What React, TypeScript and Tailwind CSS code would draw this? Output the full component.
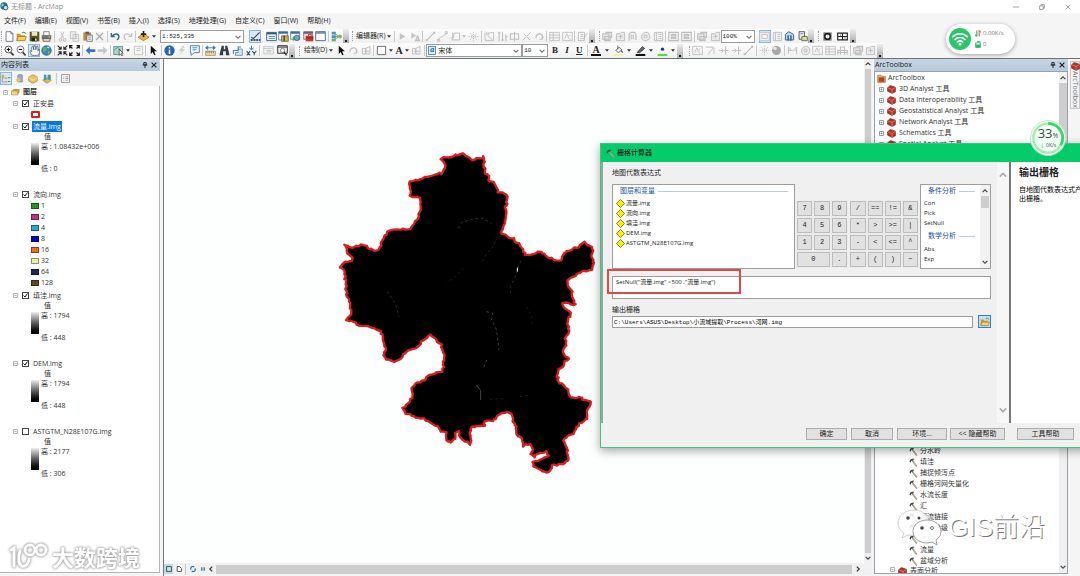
import React, { ReactNode } from "react";

const UI = "font-['Open_Sans','Noto_Sans_CJK_SC',sans-serif]";
const SONG = "font-['Liberation_Mono','Noto_Sans_CJK_SC',monospace]";

/* ---------- icons (16 x 16 grid) ---------- */

const G = "#bebebe";
const K = "#222222";

const icons: Record<string, ReactNode> = {
  new: <path d="M3 1h7l3 3v11H3zM10 1v3h3" fill="#fff" stroke="#667" strokeWidth="1.2" />,
  open: <><path d="M1 4h5l1 2h6v8H1z" fill="#c99a2e" /><path d="M3 8h12l-2 6H1z" fill="#f3cf60" stroke="#9a7420" /><path d="M9 3c2-2 4-1 5 1" stroke="#3a8a4a" fill="none" strokeWidth="1.5" /></>,
  save: <><path d="M1 1h14v14H1z" fill="#5d5420" /><path d="M4 1h8v6H4z" fill="#e8e6d0" /><path d="M4 10h8v5H4z" fill="#222" /><path d="M9 11h2v3H9z" fill="#fff" /></>,
  print: <><path d="M4 1h8v6H4z" fill="#fff" stroke="#555" /><path d="M1 6h14v6H1z" fill="#77776a" /><path d="M3 11h10v4H3z" fill="#ddd" stroke="#444" /><path d="M11 8h2v1h-2z" fill="#e8e040" /></>,
  cut: <path d="M5 1l5 10M10 1L6 11M5 11a2 2 0 100 4 2 2 0 000-4M11 11a2 2 0 100 4 2 2 0 000-4" stroke={G} strokeWidth="1.4" fill="none" />,
  copy: <path d="M2 1h8v10H2zM6 5h8v10H6zM8 8h4M8 11h4" stroke={G} strokeWidth="1.2" fill="#eee" />,
  paste: <><path d="M2 2h11v12H2z" fill="#b98a45" /><path d="M5 1h5v3H5z" fill="#555" /><path d="M7 6h8v9H7z" fill="#f4f4fa" stroke="#555" /><path d="M9 9h4M9 12h4" stroke="#668" /></>,
  del: <path d="M3 3l10 10M13 3L3 13" stroke="#aaa" strokeWidth="1.8" />,
  undo: <path d="M2 3v5h5M3 8c3-5 9-5 10 0 0 3-1 4-3 5" stroke="#31679f" strokeWidth="2.1" fill="none" />,
  redo: <path d="M14 3v5H9M13 8C10 3 4 3 3 8c0 3 1 4 3 5" stroke="#c4c4c4" strokeWidth="1.8" fill="none" />,
  add: <><path d="M8 4l8 5-8 5-8-5z" fill="#e9bd3a" stroke="#8a6d1d" /><path d="M8 0v9M4 4.500h8" stroke="#222" strokeWidth="2.400" /></>,
  editor: <><path d="M1 13h14" stroke="#222" strokeWidth="2" strokeDasharray="3 1" /><path d="M2 9l3 2 9-9" stroke="#444" strokeWidth="1.6" fill="none" /></>,
  toc: <><path d="M1 2h14v12H1z" fill="#fff" stroke="#2f6294" strokeWidth="1.4" /><path d="M1 2h14v3H1z" fill="#2f6294" /><path d="M4 8h9M4 11h9" stroke="#4a83c0" strokeWidth="1.4" /></>,
  catalog: <><path d="M1 1h13v12H1z" fill="#fff" stroke="#2f6294" /><path d="M1 1h13v3H1z" fill="#3a6da0" /><path d="M5 7h10v8H5z" fill="#d2b332" stroke="#555" /><path d="M9 7v8" stroke="#444" strokeWidth="2" /></>,
  search: <><path d="M1 1h13v11H1z" fill="#fff" stroke="#2f6294" /><path d="M1 1h13v3H1z" fill="#3a6da0" /><circle cx="10" cy="10" r="4" fill="#6ba6c5" stroke="#275070" /><path d="M5 8v6" stroke="#49a066" strokeWidth="2" /></>,
  toolbox: <><path d="M1 1h13v11H1z" fill="#f7dada" stroke="#7c4850" /><path d="M1 1h13v3H1z" fill="#675c80" /><path d="M4 7h11v8H4z" fill="#c03830" /><path d="M8 7V5h4v2M4 10h11" stroke="#6c1712" fill="none" /></>,
  python: <><path d="M1 1h14v13H1z" fill="#fff" stroke="#4a6f9a" strokeWidth="1.4" /><path d="M1 1h14v3H1z" fill="#6f8fb9" /></>,
  model: <><path d="M4 3l8 5-8 5M4 8h8" stroke="#666" fill="none" /><path d="M1 1h6v4H1zM1 6h6v4H1z" fill="#4593c4" /><path d="M1 11h6v4H1z" fill="#57b273" /><circle cx="13" cy="8" r="3" fill="#80bd58" /></>,
  zin: <><path d="M9 10l5 5" stroke="#444" strokeWidth="2.600" /><circle cx="6.500" cy="6.500" r="5" fill="#f7fafc" stroke="#555" strokeWidth="1.400" /><path d="M4 6.500h5M6.500 4v5" stroke="#111" strokeWidth="1.600" /></>,
  zout: <><path d="M9 10l5 5" stroke="#444" strokeWidth="2.600" /><circle cx="6.500" cy="6.500" r="5" fill="#f7fafc" stroke="#777" strokeWidth="1.400" /><path d="M4 6.500h5" stroke="#111" strokeWidth="1.600" /></>,
  hand: <path d="M4 15L1 9l1-1 2 2V3l2-1 1 5V1h2l1 6 1-5h2v7l1-3 2 1-2 8z" fill="#fff" stroke="#4d5a66" strokeWidth="1.1" />,
  globe: <><circle cx="8" cy="8" r="7" fill="#3d82bd" stroke="#2a5680" /><path d="M4 3c4 0 5 2 4 4s-2 4-4 3-1-5 0-7M10 9c3-1 4 0 3 3l-3 2z" fill="#69b45a" /><path d="M9 3l3 1" stroke="#cfe6fa" strokeWidth="2" /></>,
  shrink: <path d="M1 1l5 5M15 1l-5 5M1 15l5-5M15 15l-5-5M6 2v4H2M10 2v4h4M6 14v-4H2M10 14v-4h4" stroke={K} strokeWidth="1.600" fill="none" />,
  grow: <path d="M1 1l4 4M15 1l-4 4M1 15l4-4M15 15l-4-4M1 5V1h4M11 1h4v4M1 11v4h4M11 15h4v-4" stroke={K} strokeWidth="1.800" fill="none" />,
  back: <path d="M1 8l6-6v4h8v4H7v4z" fill="#3875c8" />,
  fwd: <path d="M15 8L9 2v4H1v4h8v4z" fill="#c6c6c6" />,
  selfeat: <><path d="M1 2h13v8l-5 4H1z" fill="#a6d5cf" stroke="#4b777c" /><path d="M2 7l5-4 4 6" stroke="#486" fill="none" /><path d="M9 6v9l2-2 2 3 1-1-2-3h3z" fill="#fff" stroke="#333" /></>,
  clear: <path d="M2 2h12v12H2zM5 5h6M5 8h6" stroke="#c5c5c5" fill="#f4f4f4" strokeWidth="1.300" />,
  arrow: <path d="M4 1v12l3-3 2 5 2-1-2-5h4z" fill="#111" />,
  arrowG: <path d="M4 3v10l8-5z" fill="#c4c4c4" />,
  arrowA: <><path d="M2 2v9l7-4z" fill="#c4c4c4" /><path d="M8 14l3-7 3 7zM9 12h4" stroke={G} fill="none" strokeWidth="1.500" /></>,
  info: <><circle cx="8" cy="8" r="7.500" fill="#2e63a9" /><path d="M8 7v6M8 3v2" stroke="#fff" strokeWidth="2.200" /></>,
  bolt: <path d="M10 1L4 9h4l-3 6 8-9H9l4-5z" fill="#cdcdcd" />,
  popup: <><path d="M2 1h13v10H8l-5 4v-4H2z" fill="#f0f8fd" stroke="#38729c" strokeWidth="1.200" /><path d="M5 4h7M5 7h6" stroke="#3ba1c8" strokeWidth="1.500" /></>,
  measure: <><path d="M1 9h14v6H1z" fill="#eee2a1" stroke="#8c7850" /><path d="M3 9v3M6 9v3M9 9v3M12 9v3" stroke="#555" /><path d="M1 4h14M1 4l3-2.500v5zM15 4l-3-2.500v5z" stroke="#367ca6" fill="#367ca6" strokeWidth="1.200" /></>,
  find: <path d="M4 1h3v5h2V1h3l3 12v2h-5V9H6v6H1v-2z" fill="#333a45" />,
  route: <><path d="M2 13V8h7V3h4" stroke="#4a84ba" strokeWidth="1.500" fill="none" /><path d="M9 6h6v9H5v-4h4z" fill="#d7e8f5" stroke="#38729c" /></>,
  xy: <><path d="M8 1v6M5 4l3 3 3-3" stroke="#4a84ba" strokeWidth="1.500" fill="none" /><path d="M1 9l5 6M6 9l-5 6M9 9l3 3 3-3M12 12v3" stroke="#357" strokeWidth="1.600" fill="none" /></>,
  winG: <path d="M1 2h14v11H1zM1 5h14M5 8h7M5 10h7" stroke="#c1c1c1" fill="#f1f1f1" strokeWidth="1.200" />,
  viewer: <><path d="M1 1h14v11H1z" fill="#eee" stroke="#333" strokeWidth="1.400" /><path d="M1 3h14" stroke="#333" strokeWidth="1.500" /><circle cx="8" cy="8" r="3" fill="#fff" stroke="#555" /><path d="M10 10l4 5" stroke="#333" strokeWidth="2" /></>,
  line: <><path d="M2 14L14 2" stroke={G} strokeWidth="1.500" /><path d="M1 12h3v3H1zM12 1h3v3h-3z" fill={G} /></>,
  curve: <path d="M2 14C4 6 8 11 14 3M1 12h3v3H1zM12 1h3v3h-3z" stroke={G} strokeWidth="1.300" fill="none" />,
  poly: <path d="M2 13h12V3H6L5 10H1M4 2v11" stroke={G} strokeWidth="1.400" fill="none" />,
  burst: <path d="M8 1v14M1 8h14M3 3l10 10M13 3L3 13M5 8a3 3 0 106 0 3 3 0 10-6 0" stroke={G} fill="none" strokeDasharray="2 1" />,
  cutpoly: <path d="M1 3h6l7-1v12H2zM3 4l9 9M7 3v3" stroke={G} strokeWidth="1.300" fill="none" />,
  cols: <path d="M3 1v14M8 1v14M13 5v10M1 3h4M6 13h4M12 8h3" stroke={G} strokeWidth="1.600" />,
  split: <path d="M2 4h12v8H2zM8 1v14" stroke={G} strokeWidth="1.500" fill="none" />,
  cross: <path d="M2 14L14 2M4 4l9 9" stroke={G} strokeWidth="1.400" />,
  rotG: <path d="M3 10a5 5 0 119 2M12 12V7M12 12H8" stroke={G} strokeWidth="1.700" fill="none" />,
  tableG: <path d="M1 2h14v12H1zM1 6h14M1 10h14M6 2v12" stroke={G} strokeWidth="1.200" fill="#f4f4f4" />,
  sketchG: <path d="M1 2h14v12H1zM4 11l3-7 2 4 3-2M8 8l4 5" stroke={G} strokeWidth="1.200" fill="none" />,
  formG: <path d="M2 2h9v12H2zM5 5h4M5 8h4M5 11h3M9 12l6-9" stroke={G} strokeWidth="1.400" fill="none" />,
  stackG: <path d="M1 4h9v8H1zM5 2h9v8M4 8h8v6H4z" stroke={G} strokeWidth="1.500" fill="#e4e4e4" />,
  handG: <path d="M3 14V5l3-3h5l2 3v8M6 5v7M9 5v7" stroke={G} strokeWidth="1.700" fill="none" />,
  cycleG: <path d="M3 5l4-3h4l3 4v5l-4 3H5l-3-4zM6 6h4v4H6z" stroke={G} strokeWidth="1.400" fill="#eee" />,
  pageG: <path d="M2 2h12v12H2zM5 2v12M8 5h4M8 8h4M8 11h4" stroke={G} strokeWidth="1.300" fill="#f1f1f1" />,
  gridG: <path d="M1 2h14v12H1zM5 5h2v2H5zM9 5h2v2H9zM5 9h2v2H5zM9 9h2v2H9z" stroke={G} strokeWidth="1.500" fill="#eee" />,
  foldG: <path d="M2 4h5l2-2h5v12H2zM5 8h6M8 5v6" stroke={G} strokeWidth="1.400" fill="#eaeaea" />,
  frameG: <path d="M1 2h14v12H1zM4 5h8v6H4z" stroke={G} strokeWidth="1.200" fill="#f3f3f3" />,
  pages: <><path d="M2 5l5-4 7 4v8H2z" fill="#bcd8ea" stroke="#345b80" strokeWidth="1.300" /><path d="M6 6v8M10 6v8" stroke="#345b80" strokeWidth="2" /></>,
  driven: <><path d="M3 1h8v11H3z" fill="#e9eef3" stroke="#444" strokeWidth="1.200" /><path d="M7 8h8v6H7z" fill="#d7dd95" stroke="#444" /><path d="M5 4h4" stroke="#567" /></>,
  geo: <><path d="M2 2h12v12H2z" fill="#777" /><circle cx="8" cy="8" r="4" fill="#eee" stroke="#111" strokeWidth="2" /></>,
  extent: <path d="M1 3h14v10H1zM1 8h14M8 3v10M5 6h1M11 10h1" stroke={K} strokeWidth="1.700" fill="#fff" />,
  rect: <path d="M2 2h12v12H2z" stroke="#555" strokeWidth="1.200" fill="#fff" />,
  nodes: <path d="M2 5h5v8H2zM7 5l6-3v11H7zM4 9h8" stroke="#bbb" strokeWidth="1.300" fill="none" />,
  bucket: <><path d="M4 8l5-5 4 4-5 4z" fill="#eee" stroke="#444" /><path d="M12 8l2 3" stroke="#333" strokeWidth="1.500" /><path d="M7 1v5" stroke="#333" /><path d="M1 13h14v3H1z" fill="#f5efa0" /></>,
  pen: <><path d="M3 11l8-9 3 3-7 6z" fill="#667" stroke="#222" /><path d="M1 13h14v3H1z" fill="#111" /></>,
  dot: <><circle cx="8" cy="6" r="2.400" fill="#1c2fb8" /><path d="M1 13h14v3H1z" fill="#4be33c" /></>,
  edgeG: <path d="M1 8h6M5 5l3 3-3 3M11 2v12M9 8h6" stroke={G} strokeWidth="1.400" fill="none" />,
  traceG: <path d="M1 3h11l2 2M12 4L4 14M13 5v8" stroke={G} strokeWidth="1.400" fill="none" />,
  ballG: <><circle cx="8" cy="8" r="6.500" fill="#a8a8a8" /><circle cx="6" cy="5" r="2.500" fill="#e6e6e6" /></>,
  meshG: <path d="M2 13V3l6 6 6-6v10M2 8h4M11 8h3" stroke={G} strokeWidth="1.400" fill="none" />,
  treeG: <path d="M1 14V8h14v6M5 14V3h6v11M1 11h14" stroke={G} strokeWidth="1.500" fill="none" />,
};

function Ico({ n, className = "size-[11px]" }: { n: string; className?: string }) {
  return (
    <svg viewBox="0 0 16 16" className={`shrink-0 ${className}`} aria-hidden="true">
      {icons[n]}
    </svg>
  );
}

function Tool({ n, on = false }: { n: string; on?: boolean }) {
  return (
    <button
      type="button"
      aria-label={n}
      className={`flex h-[13px] w-3 items-center justify-center ${on ? "border border-[#8ab8dc] bg-[#d3e8f8]" : ""}`}
    >
      <Ico n={n} />
    </button>
  );
}

/* A run of equally spaced tool buttons */
function Run({ names, w, on }: { names: string; w: string; on?: string }) {
  return (
    <div className={`flex shrink-0 items-center justify-around ${w}`}>
      {names.split(" ").map((n, i) => (
        <Tool key={i} n={n} on={n === on} />
      ))}
    </div>
  );
}

const Sep = () => <span className="mx-px h-[11px] w-px shrink-0 bg-[#c9c9c9]" />;
const Grip = () => <span className="mx-px h-[10px] w-0 shrink-0 border-l border-dotted border-[#a0a0a0]" />;
const More = () => (
  <span className="flex h-[14px] w-[6px] shrink-0 items-end justify-center bg-gradient-to-b from-[#eeeeee] to-[#a9a9a9]">
    <span className="mb-px size-[2px] bg-[#222]" />
  </span>
);
const Caret = ({ faint = false, wide = false }: { faint?: boolean; wide?: boolean }) => (
  <svg viewBox="0 0 6 4" className={`h-[3px] w-1 shrink-0 ${wide ? "mx-[2px]" : "mx-px"}`} aria-hidden="true">
    <path d="M0 0h6L3 4z" fill={faint ? "#bbb" : "#333"} />
  </svg>
);
const Chevron = ({ dir, className = "" }: { dir: "up" | "down" | "left" | "right"; className?: string }) => {
  const d = { up: "M1 7l4-4 4 4", down: "M1 3l4 4 4-4", left: "M7 1L3 5l4 4", right: "M3 1l4 4-4 4" }[dir];
  return (
    <svg viewBox="0 0 10 10" className={`size-[6px] shrink-0 ${className}`} aria-hidden="true">
      <path d={d} fill="none" stroke="currentColor" strokeWidth="2" />
    </svg>
  );
};

function Combo({ value, label, w, font = "", pad = "pl-[2px]" }: { value: string; label: string; w: string; font?: string; pad?: string }) {
  return (
    <div className={`relative h-[13px] shrink-0 border border-[#9b9b9b] bg-white ${w}`}>
      <select aria-label={label} className={`block h-[11px] w-full appearance-none bg-transparent leading-[11px] text-[#222] outline-none ${pad} ${font}`}>
        <option>{value}</option>
      </select>
      <Chevron dir="down" className="pointer-events-none absolute top-[3px] right-[2px] text-[#777]" />
    </div>
  );
}

/* ---------- application frame ---------- */

function TitleBar() {
  return (
    <header className="flex h-[13px] shrink-0 items-center bg-white pr-[9px] text-[#8d8d8d]">
      <svg viewBox="0 0 16 16" className="size-[9px] shrink-0" aria-hidden="true">
        <circle cx="7" cy="7" r="6.500" fill="#27738f" />
        <path d="M3 3c4-1 5 2 3 4s-4 1-4 0z" fill="#8ac7a0" />
        <circle cx="10" cy="10" r="4" fill="#c6e4ef" stroke="#174a66" strokeWidth="1.500" />
      </svg>
      <h1 className="ml-[2px] text-[7px] leading-[13px]">无标题 - ArcMap</h1>
      <div className="ml-auto flex items-center gap-5 text-[#999]">
        {["M0 5h10", "M1 3h6v6H1zM3 3V1h6v6H7", "M1 1l8 8M9 1L1 9"].map((d, i) => (
          <button key={i} type="button" aria-label={["Minimize", "Restore", "Close"][i]}>
            <svg viewBox="0 0 10 10" className="size-[6px]">
              <path d={d} fill="none" stroke="currentColor" strokeWidth="1.500" />
            </svg>
          </button>
        ))}
      </div>
    </header>
  );
}

function MenuBar() {
  const menus = ["文件(F)", "编辑(E)", "视图(V)", "书签(B)", "插入(I)", "选择(S)", "地理处理(G)", "自定义(C)", "窗口(W)", "帮助(H)"];
  return (
    <nav className="flex h-4 shrink-0 items-center gap-[9px] pl-1 text-[7px] leading-4 text-[#222]">
      {menus.map((m) => (
        <button key={m} type="button">{m}</button>
      ))}
    </nav>
  );
}

function Toolbars() {
  return (
    <div className="shrink-0 border-b border-[#6f7275] text-[7px]">
      <div className="flex h-[14px] w-max items-center bg-gradient-to-b from-[#fdfdfd] to-[#f0f0f0]">
        <Grip />
        <Run names="new open save print" w="w-[50px]" />
        <Sep />
        <Run names="cut copy paste del" w="w-[50px]" />
        <Sep />
        <Run names="undo redo" w="w-[25px]" />
        <Sep />
        <Run names="add" w="w-[13px]" />
        <Caret wide />
        <span className="w-[2px]" />
        <Combo value="1:525,335" label="比例" w="w-[84px]" font="font-['Liberation_Mono',monospace] text-[6px]" pad="pl-px" />
        <span className="w-[4px]" />
        <Run names="editor" w="w-[14px]" on="editor" />
        <span className="w-[3px]" />
        <Run names="toc catalog search toolbox python" w="w-[62px]" />
        <Sep />
        <Run names="model" w="w-[13px]" />
        <More />
        <span className="w-[2px]" />
        <Grip />
        <button type="button" className="ml-[2px] flex items-center">编辑器(R)<Caret wide /></button>
        <Sep />
        <Run names="arrowG arrowA" w="w-[25px]" />
        <Sep />
        <Run names="line curve poly" w="w-[37px]" />
        <Caret faint />
        <Run names="burst" w="w-[13px]" />
        <Sep />
        <Run names="cutpoly cols split cross rotG" w="w-[62px]" />
        <Sep />
        <Run names="tableG sketchG" w="w-[25px]" />
        <Sep />
        <Run names="formG" w="w-[13px]" />
        <More />
        <span className="w-[3px]" />
        <Grip />
        <Run names="stackG foldG handG cycleG pageG" w="w-[63px]" />
        <Sep />
        <Run names="gridG gridG" w="w-[26px]" />
        <Sep />
        <Run names="stackG foldG" w="w-[25px]" />
        <Combo value="100%" label="缩放" w="w-[34px]" font="font-['Liberation_Mono',monospace] text-[6px]" pad="pl-0" />
        <span className="w-[3px]" />
        <Run names="frameG pageG pages driven" w="w-[50px]" on="frameG" />
        <More />
        <span className="w-[3px]" />
        <Grip />
        <Run names="geo extent" w="w-[30px]" />
        <More />
      </div>
      <div className="flex h-[15px] w-max items-center bg-gradient-to-b from-[#fdfdfd] to-[#f0f0f0]">
        <Grip />
        <Run names="zin zout hand globe" w="w-[50px]" on="hand" />
        <Sep />
        <Run names="shrink grow" w="w-[25px]" />
        <Sep />
        <Run names="back fwd" w="w-[25px]" />
        <Sep />
        <Run names="selfeat" w="w-[12px]" />
        <Caret wide />
        <Run names="clear" w="w-[12px]" />
        <Sep />
        <Run names="arrow" w="w-[13px]" />
        <Sep />
        <Run names="info bolt popup" w="w-[38px]" />
        <Sep />
        <Run names="measure find route xy" w="w-[54px]" />
        <Sep />
        <Run names="winG viewer" w="w-[28px]" />
        <More />
        <span className="w-[3px]" />
        <Grip />
        <button type="button" className="ml-[3px] flex items-center">绘制(D)<Caret wide /></button>
        <Run names="arrow rotG nodes" w="w-[37px]" />
        <Sep />
        <Run names="rect" w="w-[13px]" />
        <Caret />
        <button type="button" aria-label="Text" className="w-[10px] font-['Liberation_Serif',serif] text-[10px] font-bold">A</button>
        <Caret />
        <Run names="nodes" w="w-[13px]" />
        <Sep />
        <div className="relative flex">
          <Combo value="宋体" label="字体" w="w-[96px]" font="text-[7px]" pad="pl-[11px]" />
          <span className="pointer-events-none absolute top-[2px] left-[2px] h-[9px] w-2 border border-[#5b94b5] bg-[#d8effa] text-center font-['Liberation_Serif',serif] text-[8px] leading-[6px] font-bold text-[#175f8a] italic">a</span>
        </div>
        <Combo value="10" label="字号" w="w-[26px]" font="font-['Liberation_Mono',monospace] text-[6px]" pad="pl-px" />
        <div className="flex w-[38px] justify-around font-['Liberation_Serif',serif] text-[9px] leading-[13px] font-bold text-[#222]">
          <button type="button">B</button>
          <button type="button" className="italic">I</button>
          <button type="button" className="underline">U</button>
        </div>
        <Sep />
        <button type="button" aria-label="Font color" className="mx-[2px] h-[11px] w-[10px] border-b-2 border-[#111] text-center font-['Liberation_Serif',serif] text-[10px] leading-[9px] font-bold">A</button>
        <Caret wide />
        <Run names="bucket" w="w-[14px]" />
        <Caret wide />
        <Run names="pen" w="w-[14px]" />
        <Caret wide />
        <Run names="dot" w="w-[14px]" />
        <Caret wide />
        <More />
        <span className="w-[5px]" />
        <Grip />
        <Run names="sketchG traceG edgeG edgeG line" w="w-[64px]" />
        <Sep />
        <Run names="burst ballG" w="w-[25px]" />
        <Sep />
        <Run names="meshG cycleG sketchG tableG treeG" w="w-[63px]" />
        <Sep />
        <Run names="stackG foldG" w="w-[25px]" />
        <More />
      </div>
    </div>
  );
}

function PanelHeader({ title }: { title: string }) {
  return (
    <div className="flex h-3 shrink-0 items-center bg-gradient-to-b from-[#c6d6e4] to-[#b5cadd] pr-[3px] text-[7px] leading-3 text-[#222]">
      <h2 className="pl-px">{title}</h2>
      <button type="button" aria-label="Pin" className="ml-auto">
        <svg viewBox="0 0 10 10" className="size-[6px]"><path d="M3 1h4v4H3zM1 5h8M5 5v5" stroke="#222" strokeWidth="1.600" fill="none" /></svg>
      </button>
      <button type="button" aria-label="Close panel" className="ml-[3px]">
        <svg viewBox="0 0 10 10" className="size-[6px]"><path d="M1 1l8 8M9 1L1 9" stroke="#222" strokeWidth="2" /></svg>
      </button>
    </div>
  );
}

/* ---------- table of contents ---------- */

const Expander = ({ plus = false }: { plus?: boolean }) => (
  <svg viewBox="0 0 10 10" className="size-[5px] shrink-0" aria-hidden="true">
    <path d={plus ? "M1 1h8v8H1zM3 5h4M5 3v4" : "M1 1h8v8H1zM3 5h4"} fill="#fff" stroke={plus ? "#6d7f9a" : "#9a9a9a"} strokeWidth="1.500" />
  </svg>
);

function Layer({ name, checked = true, selected = false, children }: { name: string; checked?: boolean; selected?: boolean; children: ReactNode }) {
  return (
    <li className="pb-[2px]">
      <div className="flex h-[11px] items-center pl-[13px]">
        <Expander />
        <label className="ml-1 flex items-center">
          <input
            type="checkbox"
            defaultChecked={checked}
            className="peer size-[7px] appearance-none border border-[#444] bg-white"
          />
          <svg viewBox="0 0 10 10" className="invisible -ml-[6px] size-[5px] peer-checked:visible" aria-hidden="true">
            <path d="M1 5l3 3 5-7" stroke="#111" strokeWidth="2" fill="none" />
          </svg>
          <span className={`ml-1 px-px leading-[11px] ${selected ? "bg-[#0a78d6] text-white" : ""}`}>{name}</span>
        </label>
      </div>
      {children}
    </li>
  );
}

function Ramp({ high, low }: { high: string; low: string }) {
  return (
    <div className="h-[55px] pl-[31px]">
      <div className="h-[10px] pl-[13px] leading-[10px]">值</div>
      <div className="flex">
        <span className="mt-[1px] h-[22px] w-2 bg-gradient-to-b from-[#eeeeee] to-[#000000]" />
        <div className="ml-[2px] flex h-8 flex-col justify-between leading-[10px]">
          <span>高 : {high}</span>
          <span>低 : {low}</span>
        </div>
      </div>
    </div>
  );
}

const flow: [string, string][] = [
  ["1", "bg-[#279321]"], ["2", "bg-[#b83680]"], ["4", "bg-[#2ba5d6]"], ["8", "bg-[#0404b8]"],
  ["16", "bg-[#ee6c1c]"], ["32", "bg-[#e6f5a3]"], ["64", "bg-[#192758]"], ["128", "bg-[#5a4a1e]"],
];

function Contents() {
  return (
    <aside className="flex w-40 shrink-0 flex-col text-[7px] text-[#333]">
      <PanelHeader title="内容列表" />
      <div className="flex h-[15px] shrink-0 items-center gap-[2px] bg-[#f4f4f4]">
        <button type="button" aria-label="按绘制顺序列出" className="flex h-[13px] w-3 items-center justify-center border border-[#8ab8dc] bg-[#d3e8f8]">
          <svg viewBox="0 0 16 16" className="size-[10px]"><path d="M2 1v12h4M2 6h4" stroke="#777" fill="none" /><path d="M1 1h4v4H1zM6 5h4v3H6zM6 11h4v3H6z" fill="#dfb240" /><path d="M11 6h4M11 12h4" stroke="#579" strokeWidth="1.500" /></svg>
        </button>
        <button type="button" aria-label="按源列出" className="p-px">
          <svg viewBox="0 0 16 16" className="size-[9px]"><path d="M5 2c3-2 7-1 8 0v12H5z" fill="#9eafc6" stroke="#5b6880" /><path d="M1 10l6-3 4 4-5 4z" fill="#e2c060" /></svg>
        </button>
        <button type="button" aria-label="按可见性列出" className="p-px">
          <svg viewBox="0 0 16 16" className="size-[10px]"><path d="M8 1l7 4v6l-7 4-7-4V5z" fill="#eac25c" stroke="#a88434" /><path d="M1 6l7 4 7-4" stroke="#fff3c8" fill="none" /></svg>
        </button>
        <button type="button" aria-label="按选择列出" className="p-px">
          <svg viewBox="0 0 16 16" className="size-[10px]"><path d="M1 10l7-4 7 4-7 5z" fill="#e4bb50" stroke="#a88434" /><path d="M3 1h4v9H3zM9 1h5v8H9z" fill="#3f93b6" /></svg>
        </button>
        <Sep />
        <button type="button" aria-label="选项" className="p-px">
          <svg viewBox="0 0 16 16" className="size-[9px]"><path d="M1 1h14v14H1zM4 5h2M8 5h5M4 8h2M8 8h5M4 11h2M8 11h5" fill="#fff" stroke="#777" strokeWidth="1.300" /></svg>
        </button>
      </div>
      <ul className="min-h-0 flex-1 overflow-hidden border-r border-b border-[#aeb4ba] bg-white">
        <li className="flex h-3 items-center pl-[3px] font-bold">
          <Expander />
          <svg viewBox="0 0 18 16" className="mx-[3px] h-[8px] w-[9px]"><path d="M1 6l5-4h11l-4 4zM13 6l4-4v7l-4 5z" fill="#c99b3c" /><path d="M1 6h12v8H1z" fill="#f2d489" stroke="#a77b2b" /></svg>
          图层
        </li>
        <Layer name="正安县">
          <div className="flex h-[10px] items-center pl-[31px]"><span className="h-[7px] w-[9px] rounded-[1px] border-2 border-[#e21b1b] bg-white" /></div>
        </Layer>
        <Layer name="流量.img" selected><Ramp high="1.08432e+006" low="0" /></Layer>
        <Layer name="流向.img">
          {flow.map(([n, c]) => (
            <div key={n} className="flex h-[11px] items-center pl-[31px] leading-[11px]">
              <span className={`mr-[2px] h-[6px] w-2 border border-black/40 ${c}`} />
              {n}
            </div>
          ))}
        </Layer>
        <Layer name="填洼.img"><Ramp high="1794" low="448" /></Layer>
        <Layer name="DEM.img"><Ramp high="1794" low="448" /></Layer>
        <Layer name="ASTGTM_N28E107G.img" checked={false}><Ramp high="2177" low="306" /></Layer>
      </ul>
      <div className="h-[3px] shrink-0" />
    </aside>
  );
}

/* ---------- map ---------- */

const outline =
  "335,55 348,52 365,50 375,45 390,45 397,40 408,46 420,55 428,62 440,56 452,55 462,50 462,68 460,80 467,88 465,100 475,108 474,120 490,128 500,142 505,155 520,160 532,172 530,190 524,200 530,210 525,235 527,250 518,265 516,278 535,290 552,297 565,312 578,328 587,345 610,343 632,333 645,348 665,355 672,362 692,362 700,345 712,332 730,325 752,318 766,308 778,318 788,320 785,345 792,370 788,388 770,395 745,397 730,410 712,420 712,435 725,452 728,475 735,495 722,492 712,488 696,490 702,505 718,512 722,528 712,545 717,575 705,595 708,615 700,635 706,652 716,657 702,665 698,680 684,685 682,708 686,728 700,735 715,750 722,770 735,775 745,768 760,778 785,788 778,805 768,818 772,835 755,848 740,860 732,880 712,885 698,903 712,930 715,955 705,970 680,975 665,975 662,990 650,1000 632,990 612,982 610,965 640,958 655,945 648,935 628,940 612,950 603,942 608,925 600,912 578,917 575,895 557,885 560,860 550,845 547,822 530,815 512,818 500,835 488,845 465,842 462,860 440,858 425,862 420,880 422,912 405,902 390,895 387,880 383,873 377,880 376,895 362,910 347,900 350,880 335,875 325,860 300,848 280,835 250,828 225,820 220,805 235,790 240,775 250,768 247,745 262,728 285,720 302,703 320,698 338,697 342,680 341,640 333,615 318,598 302,585 285,595 270,610 258,625 235,632 222,645 210,655 190,667 165,655 160,635 168,625 158,600 155,580 140,568 120,558 97,560 75,550 50,540 62,520 60,490 50,465 48,440 45,415 45,395 30,380 38,367 65,362 67,355 55,340 42,312 60,322 95,315 115,322 130,332 145,328 155,310 170,275 185,268 220,266 242,267 258,245 268,225 270,200 268,175 240,167 240,125 270,118 300,107 335,100 345,85 342,68";

/* Breaks every long edge into short, slightly irregular steps, like a surveyed boundary */
function roughen(points: string) {
  const p = points.split(" ").map((s) => s.split(",").map(Number));
  const out: string[] = [];
  let seed = 7;
  const rnd = () => {
    seed = (seed * 16807) % 2147483647;
    return seed / 2147483647 - 0.5;
  };
  p.forEach(([x, y], i) => {
    const [u, v] = p[(i + 1) % p.length];
    const n = Math.max(1, Math.round(Math.hypot(u - x, v - y) / 7));
    for (let k = 0; k < n; k++) {
      const t = k / n;
      out.push(`${(x + (u - x) * t + rnd() * 6).toFixed(1)},${(y + (v - y) * t + rnd() * 6).toFixed(1)}`);
    }
  });
  return out.join(" ");
}

const boundary = roughen(outline);

function MapView() {
  return (
    <main className="flex min-w-0 flex-1 flex-col border-l border-[#777]">
      <div className="flex min-h-0 flex-1">
        <div className="min-w-0 flex-1 overflow-hidden bg-[#fdfefe] pt-[81px] pl-[166px]">
          <svg viewBox="0 0 840 1035" className="h-[345px] w-[280px]" role="img" aria-label="正安县">
            <polygon points={boundary} fill="#000" stroke="#dd1c1c" strokeWidth="7" strokeLinejoin="round" />
            <g fill="none" stroke="#4a4a4a" strokeWidth="2" strokeDasharray="7 9">
              <path d="M385,265 395,247 430,237 455,234 485,250" />
              <path d="M500,290 490,320 470,340 455,368M400,385 375,410 350,428" stroke="#2c2c2c" />
              <path d="M172,455 195,490 207,530" />
              <path d="M572,362 556,410 542,440 542,465" stroke="#444" />
              <path d="M470,515 488,520 485,540 500,570 507,630M470,660 458,690" stroke="#666" />
              <path d="M440,735 452,752 452,780" stroke="#666" strokeDasharray="none" />
              <path d="M590,500 605,530 607,560M480,778 520,775M570,770 600,765" stroke="#262626" />
            </g>
            <path d="M562,383v12" stroke="#fff" strokeWidth="3" />
          </svg>
        </div>
        <div className="flex w-2 flex-col items-center justify-between bg-[#f0f0f0] py-[2px] text-[#444]">
          <Chevron dir="up" />
          <div className="my-[2px] w-[6px] flex-1 bg-[#cdcdcd]" />
          <Chevron dir="down" />
        </div>
      </div>
      <div className="flex h-3 shrink-0 items-center bg-[#f1f1f1] pr-[9px] text-[#333]">
        <button type="button" aria-label="数据视图" className="flex h-[10px] w-[9px] items-center justify-center bg-[#bcd9ef]">
          <svg viewBox="0 0 10 10" className="size-[6px]"><path d="M1 1h8v8H1z" fill="#d9e7c5" stroke="#345" strokeWidth="1.500" /></svg>
        </button>
        <button type="button" aria-label="布局视图" className="flex w-[11px] justify-center">
          <svg viewBox="0 0 10 10" className="size-[6px]"><path d="M2 1h4l3 3v5H2z" fill="#fff" stroke="#444" strokeWidth="1.500" /></svg>
        </button>
        <Sep />
        <button type="button" aria-label="刷新" className="flex w-[11px] justify-center">
          <svg viewBox="0 0 10 10" className="size-[6px]"><path d="M2 6a3 3 0 015-4M8 4a3 3 0 01-5 4" stroke="#2c67a8" strokeWidth="2" fill="none" /></svg>
        </button>
        <button type="button" aria-label="暂停" className="flex w-[9px] justify-center">
          <svg viewBox="0 0 10 10" className="size-[6px]"><path d="M2 2h2v6H2zM6 2h2v6H6z" fill="#2c5c98" /></svg>
        </button>
        <Chevron dir="left" className="mx-px" />
        <div className="mx-px h-[9px] flex-1 bg-[#cdcdcd]" />
        <Chevron dir="right" className="mx-[2px]" />
      </div>
      <div className="h-px shrink-0" />
    </main>
  );
}

/* ---------- ArcToolbox ---------- */

const RedBox = () => (
  <svg viewBox="0 0 16 16" className="size-[9px] shrink-0" aria-hidden="true">
    <path d="M1 5l5-4 9 3v8l-6 3-8-4z" fill="#b83229" stroke="#671712" />
    <path d="M1 5l8 3 6-4M9 8v7" stroke="#ec8a7c" fill="none" strokeWidth="1.300" />
  </svg>
);
const Hammer = ({ className = "size-[9px]" }: { className?: string }) => (
  <svg viewBox="0 0 16 16" className={`shrink-0 ${className}`} aria-hidden="true">
    <path d="M6 5l8 10" stroke="#8f8775" strokeWidth="2.600" />
    <path d="M7 6l7 9" stroke="#d9d1bd" strokeWidth="1" />
    <path d="M1 7c0-4 3-6 8-6L7 5 4 5 3 8z" fill="#3c4646" />
  </svg>
);

const toolboxes = ["3D Analyst 工具", "Data Interoperability 工具", "Geostatistical Analyst 工具", "Network Analyst 工具", "Schematics 工具", "Spatial Analyst 工具"];
const hydro = ["分水岭", "填洼", "捕捉倾泻点", "栅格河网矢量化", "水流长度", "汇", "河流链接", "河网分级", "流向", "流量", "盆域分析"];

function Toolbox() {
  return (
    <>
      <aside className="ml-[2px] flex w-[194px] shrink-0 flex-col text-[7px] text-[#333]">
        <PanelHeader title="ArcToolbox" />
        <div className="flex min-h-0 flex-1 overflow-hidden border border-[#9ba1a8] bg-white">
          <div className="flex min-w-0 flex-1 flex-col">
            <ul>
              <li className="flex h-3 items-center gap-[2px] pl-[2px]">
                <svg viewBox="0 0 16 16" className="size-[9px]"><path d="M1 2h6l1 2h7v11H1z" fill="#e6b83f" stroke="#966" /><path d="M3 6h10v8H3z" fill="#c4392c" /></svg>
                ArcToolbox
              </li>
              {toolboxes.map((t) => (
                <li key={t} className="flex h-[11px] items-center gap-[3px] pl-1">
                  <Expander plus /><RedBox />{t}
                </li>
              ))}
            </ul>
            <ul className="mt-auto">
              {hydro.map((t) => (
                <li key={t} className="flex h-[11px] items-center gap-[2px] pl-[34px]">
                  <Hammer />{t}
                </li>
              ))}
              <li className="flex h-[6px] items-start gap-[3px] pl-[15px] leading-[8px]"><Expander /><RedBox />表面分析</li>
            </ul>
          </div>
          <div className="flex w-2 flex-col items-center justify-between bg-[#f0f0f0] py-[3px] text-[#444]">
            <Chevron dir="up" />
            <div className="mt-[2px] mb-auto h-16 w-2 bg-[#cdcdcd]" />
            <Chevron dir="down" />
          </div>
        </div>
        <div className="h-[2px] shrink-0" />
      </aside>
      <div className="ml-[2px] w-[10px] shrink-0 pt-[2px]">
        <button type="button" className="flex h-12 w-[10px] flex-col items-center border border-[#c9c9c9] bg-[#f4f4f4] text-[7px] text-[#777]">
          <RedBox />
          <span className="leading-[8px] [writing-mode:vertical-rl]">ArcToolbox</span>
        </button>
      </div>
    </>
  );
}

/* ---------- raster calculator ---------- */

const keyCls = "flex h-[15px] items-center justify-center border border-[#bcbcbc] bg-[#e1e1e1] shadow-[0_0_0_1px_#ececec]";
const SectionHead = ({ children, end }: { children: ReactNode; end: string }) => (
  <div className={`flex items-center gap-[3px] pl-[7px] text-[#2450a0] ${end}`}>
    {children}
    <span className="h-px flex-1 bg-current opacity-30" />
  </div>
);

function Calculator() {
  const digits = ["7", "8", "9", "4", "5", "6", "1", "2", "3", "0", "."];
  const ops = ["/", "==", "!=", "&", "*", ">", ">=", "|", "-", "<", "<=", "^", "+", "(", ")", "~"];
  const btn = "h-3 border border-[#adadad] bg-[#e1e1e1] text-center leading-[10px]";
  return (
    <section
      role="dialog"
      aria-label="栅格计算器"
      className="absolute top-[143px] -right-[30px] left-[600px] z-10 border border-[#3fc487] bg-[#f0f0f0] text-[7px] text-[#222] shadow-[0_3px_9px_rgba(0,0,0,0.35)]"
    >
      <div className="flex h-[18px] items-center gap-[2px] bg-[#04cc6a] pl-[5px]">
        <Hammer />
        <h2 className="font-medium">栅格计算器</h2>
      </div>
      <div className="flex h-[261px] border-l-2 border-[#8fa89c]">
        <div className="w-[394px] shrink-0 pl-[9px]">
          <div className="h-[22px] pt-[5px] leading-3">地图代数表达式</div>
          <div className="flex">
            <div className="h-[85px] w-[183px] border border-[#9d9d9d] bg-white">
              <SectionHead end="mr-[6px] h-[13px]">图层和变量</SectionHead>
              <ul className="text-[6px]">
                {["流量.img", "流向.img", "填洼.img", "DEM.img", "ASTGTM_N28E107G.img"].map((f) => (
                  <li key={f} className="flex h-[10px] items-center gap-px pl-[3px]">
                    <svg viewBox="0 0 10 10" className="size-[9px]"><path d="M5 .5L9.500 5 5 9.500.5 5z" fill="#f6f000" stroke="#777716" /></svg>
                    {f}
                  </li>
                ))}
              </ul>
            </div>
            <div className={`mt-[17px] ml-[2px] grid h-[66px] w-[50px] grid-cols-3 gap-[2px] ${SONG}`}>
              {digits.map((d) => (
                <button key={d} type="button" className={`${keyCls} ${d === "0" ? "col-span-2" : ""}`}>{d}</button>
              ))}
            </div>
            <div className={`mt-[17px] ml-[3px] grid h-[66px] w-[68px] grid-cols-4 gap-[2px] ${SONG}`}>
              {ops.map((d) => (
                <button key={d} type="button" className={keyCls}>{d}</button>
              ))}
            </div>
            <div className="ml-[2px] flex h-[85px] w-[71px] border border-[#9d9d9d] bg-white">
              <div className="min-w-0 flex-1">
                <SectionHead end="mr-[5px] h-[13px]">条件分析</SectionHead>
                <ul className="pl-[3px] text-[6px] leading-[10px]">
                  <li>Con</li><li>Pick</li><li>SetNull</li>
                </ul>
                <SectionHead end="mr-[5px] h-4">数学分析</SectionHead>
                <ul className="pl-[3px] text-[6px] leading-[10px]">
                  <li>Abs</li><li>Exp</li>
                </ul>
              </div>
              <div className="flex w-[10px] flex-col items-center bg-[#f2f2f2] py-[3px] text-[#444]">
                <Chevron dir="up" />
                <div className="mt-[2px] mb-auto h-3 w-2 bg-[#cdcdcd]" />
                <Chevron dir="down" />
              </div>
            </div>
          </div>
          <div className="relative mt-[7px] w-[379px]">
            <textarea
              aria-label="地图代数表达式"
              defaultValue={'SetNull("流量.img" <500 ,"流量.img")'}
              className="block h-[23px] w-full resize-none overflow-hidden border border-[#9d9d9d] bg-white py-0 pl-[3px] text-[6px] leading-[11px] outline-none"
            />
            <span className="pointer-events-none absolute -top-[7px] -left-[5px] h-[25px] w-[134px] border-2 border-[#dc4a4a]" />
          </div>
          <label htmlFor="out" className="mt-[5px] block leading-[11px]">输出栅格</label>
          <div className="flex items-center gap-[5px]">
            <input
              id="out"
              defaultValue="C:\Users\ASUS\Desktop\小流域提取\Process\河网.img"
              className={`h-3 w-[361px] border border-[#9d9d9d] bg-white pl-px text-[6px] leading-[10px] text-black outline-none ${SONG}`}
            />
            <button type="button" aria-label="浏览" className="flex size-[13px] items-center justify-center border border-[#2b82d0] bg-[#c5e0f6]">
              <Ico n="open" className="size-[10px]" />
            </button>
          </div>
        </div>
        <div className="flex w-[12px] shrink-0 flex-col items-center justify-between bg-[#f7f7f7] py-[9px] text-[#aaa]">
          <Chevron dir="up" className="size-[8px]" />
          <Chevron dir="down" className="size-[8px]" />
        </div>
        <div className="min-w-0 flex-1 border-l-2 border-[#777] bg-white pt-[3px] pl-2">
          <h3 className="text-[10px] leading-[14px] font-bold">输出栅格</h3>
          <p className={`mt-[7px] text-[7px] leading-[9px] text-black ${SONG}`}>自地图代数表达式产<br />出栅格。</p>
        </div>
      </div>
      <div className="flex h-6 items-start pt-[5px] pl-[205px]">
        <button type="button" className={`w-[41px] ${btn}`}>确定</button>
        <button type="button" className={`ml-1 w-[42px] ${btn}`}>取消</button>
        <button type="button" className={`ml-1 w-[50px] ${btn}`}>环境...</button>
        <button type="button" className={`ml-[3px] w-[55px] ${btn}`}>&lt;&lt; 隐藏帮助</button>
        <button type="button" className={`ml-3 w-[57px] ${btn}`}>工具帮助</button>
      </div>
    </section>
  );
}

/* ---------- floating widgets ---------- */

function NetworkPill() {
  return (
    <div className="absolute top-6 left-[946px] z-20 flex h-[30px] w-[69px] items-center rounded-full bg-white pl-[3px] text-[6px] text-[#777] shadow-[0_1px_4px_rgba(0,0,0,0.35)]">
      <svg viewBox="0 0 22 22" className="size-[22px]" aria-hidden="true">
        <circle cx="11" cy="11" r="11" fill="#2cc56c" />
        <g fill="none" stroke="#fff" strokeWidth="1.600" strokeLinecap="round">
          <path d="M3.800 8.800c4-4 10.400-4 14.400 0M6 11.500c2.800-2.700 7.200-2.700 10 0M8.300 14c1.600-1.400 3.800-1.400 5.400 0" />
        </g>
        <circle cx="11" cy="16.300" r="1.500" fill="#fff" />
      </svg>
      <div className="ml-1 leading-[11px]">
        <div className="flex items-center gap-[2px]">
          <svg viewBox="0 0 10 12" className="h-[7px] w-[6px]"><path d="M3 1v10M0 8l3 3" stroke="#2cb765" strokeWidth="2" fill="none" /><path d="M7 11V1l3 3" stroke="#ed6b45" strokeWidth="2" fill="none" /></svg>
          0.00K/s
        </div>
        <div className="flex items-center gap-[2px]">
          <svg viewBox="0 0 10 12" className="h-[7px] w-[6px]"><path d="M1 3h8v8H1zM3 1h6" stroke="#2cb765" strokeWidth="1.500" fill="none" /><path d="M1 6h8v5H1z" fill="#2cb765" /></svg>
          0
        </div>
      </div>
    </div>
  );
}

function Gauge() {
  return (
    <div className="absolute top-[120px] left-[1030px] z-20 flex size-9 flex-col items-center justify-center rounded-full border border-[#c5e8cd] bg-[#f3fff4] text-[#444]">
      <svg viewBox="0 0 36 36" className="absolute inset-0 size-[34px]" aria-hidden="true">
        <circle cx="18" cy="18" r="15.500" fill="none" stroke="#a5ecb4" strokeWidth="2.500" />
        <path d="M18 2.500a15.500 15.500 0 0113.400 23.300" fill="none" stroke="#42d368" strokeWidth="3" />
      </svg>
      <div className="relative flex items-baseline text-[13px] leading-[13px]">33<span className="text-[7px]">%</span></div>
      <div className="relative text-[5px] leading-[7px]"><span className="text-[#2cb765]">↓</span> 0K/s</div>
    </div>
  );
}

function Watermarks() {
  return (
    <>
      <div className="absolute bottom-1 left-2 z-20 flex items-center gap-1 text-white [filter:drop-shadow(0_0_1px_#999)_drop-shadow(0_0_1px_#bbb)]">
        <svg viewBox="0 0 40 30" className="h-[30px] w-10" fill="none" stroke="#fff" strokeWidth="3" strokeLinecap="round" aria-hidden="true">
          <path d="M3 8l3-2v18M12 9c-2 6-2 13 2 15 4 1 7-3 7-7" />
          <circle cx="22" cy="8" r="5" />
          <circle cx="33" cy="8" r="5" />
        </svg>
        <span className="text-[22px] leading-[30px] font-bold">大数跨境</span>
      </div>
      <div className="absolute right-[35px] bottom-[30px] z-20 flex items-center gap-[6px]">
        <svg viewBox="0 0 45 38" className="h-[38px] w-[45px]" aria-hidden="true">
          <path d="M17 2C8 2 1 8 1 15c0 5 3 8 6 10l-2 5 6-3c10 2 21-3 21-12C32 8 26 2 17 2z" fill="#fff" fillOpacity=".85" stroke="#bbb" strokeWidth=".7" />
          <path d="M30 12c-8 0-14 5-14 11.500S22 35 30 35l5-1 5 3-1-5c3-2 5-5 5-8.500C44 17 38 12 30 12z" fill="#fff" fillOpacity=".92" stroke="#888" strokeWidth=".8" />
          <g fill="#444"><circle cx="11" cy="10" r="1.800" /><circle cx="22" cy="10" r="1.500" /><circle cx="25" cy="20" r="1.800" /></g>
          <circle cx="35" cy="20" r="1.500" fill="#fff" stroke="#555" strokeWidth=".8" />
        </svg>
        <span className="font-['Liberation_Sans','Noto_Sans_CJK_SC',sans-serif] text-[26px] leading-[34px] font-light text-white [text-shadow:1px_1px_0_#777]">GIS前沿</span>
      </div>
    </>
  );
}

export default function App() {
  return (
    <div className={`relative flex h-screen flex-col overflow-hidden bg-[#f5f5f5] text-[#222] ${UI}`}>
      <TitleBar />
      <MenuBar />
      <Toolbars />
      <div className="flex min-h-0 flex-1">
        <Contents />
        <div className="w-[3px] shrink-0" />
        <MapView />
        <Toolbox />
      </div>
      <Calculator />
      <NetworkPill />
      <Gauge />
      <Watermarks />
    </div>
  );
}
